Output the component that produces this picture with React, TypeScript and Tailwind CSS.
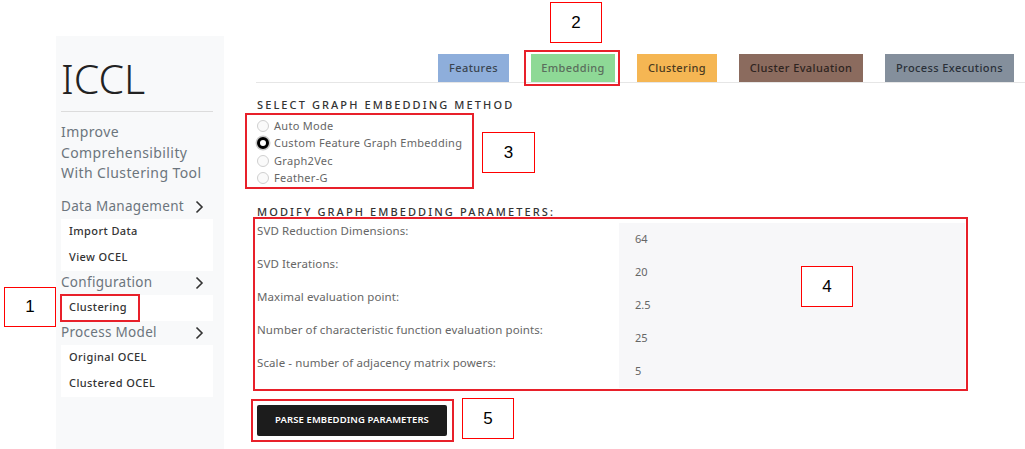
const font = { fontFamily: '"Noto Sans", "Open Sans", sans-serif' };

const NumBox = ({ n, className }: { n: string; className: string }) => (
  <div
    className={`absolute flex items-center justify-center border border-[#ff0000] bg-white text-[17px] text-black ${className}`}
    style={{ fontFamily: '"Liberation Sans", Arial, sans-serif' }}
  >
    {n}
  </div>
);

const Chevron = () => (
  <svg width="10" height="14" viewBox="0 0 10 14" fill="none">
    <path d="M2.5 1.5 8 7l-5.5 5.5" stroke="#333" strokeWidth="1.6" />
  </svg>
);

const SideGroup = ({ title, items, marked }: { title: string; items: string[]; marked?: string }) => (
  <div>
    <div className="flex h-[24px] items-center justify-between pr-[9px] text-[13.5px] tracking-[0.3px] text-[#6c757d]">
      {title}
      <Chevron />
    </div>
    <div className="bg-white">
      {items.map((it) => (
        <div key={it} className="relative flex h-[26px] items-center pl-[8px] text-[11px] font-medium tracking-[0.4px] text-[#333]">
          {it}
          {marked === it && <span className="absolute -left-[1px] top-[-1px] h-[28px] w-[80px] border-2 border-[#e8202a]" />}
        </div>
      ))}
    </div>
  </div>
);

const tabs = [
  { label: 'Features', w: 'w-[71px]', bg: 'bg-[#8eaedb]', c: 'text-[#3a4550]' },
  { label: 'Embedding', w: 'w-[84px]', bg: 'bg-[#8ed996]', c: 'text-[#5a6e5c]' },
  { label: 'Clustering', w: 'w-[80px]', bg: 'bg-[#f5b653]', c: 'text-[#4a3a20]' },
  { label: 'Cluster Evaluation', w: 'w-[124px]', bg: 'bg-[#8b6b5e]', c: 'text-[#2e2420]' },
  { label: 'Process Executions', w: 'w-[129px]', bg: 'bg-[#848f9c]', c: 'text-[#2a3038]' },
];

const methods = ['Auto Mode', 'Custom Feature Graph Embedding', 'Graph2Vec', 'Feather-G'];

const params = [
  ['SVD Reduction Dimensions:', '64'],
  ['SVD Iterations:', '20'],
  ['Maximal evaluation point:', '2.5'],
  ['Number of characteristic function evaluation points:', '25'],
  ['Scale - number of adjacency matrix powers:', '5'],
];

export default function App() {
  return (
    <div className="relative flex h-[449px] w-[1025px] overflow-hidden bg-white" style={font}>
      {/* sidebar */}
      <aside className="ml-[56px] mt-[36px] w-[168px] bg-[#f8f9fa] pl-[5px] pr-[11px]">
        <div className="mt-[14px] text-[41px] font-light leading-[56px] text-[#222]">ICCL</div>
        <div className="mt-[5px] border-t border-[#dcdcdc]" />
        <div className="mt-[10px] text-[14px] leading-[20.5px] tracking-[0.4px] text-[#6c757d]">
          Improve
          <br />
          Comprehensibility
          <br />
          With Clustering Tool
        </div>
        <div className="mt-[11px]">
          <SideGroup title="Data Management" items={['Import Data', 'View OCEL']} />
          <SideGroup title="Configuration" items={['Clustering']} marked="Clustering" />
          <SideGroup title="Process Model" items={['Original OCEL', 'Clustered OCEL']} />
        </div>
      </aside>

      {/* main */}
      <main className="ml-[32px] flex flex-1 flex-col">
        <div className="mt-[54px] flex justify-end gap-[22px] border-b border-[#e6e6e6] pr-[11px]">
          {tabs.map((t) => (
            <div
              key={t.label}
              className={`relative flex h-[28px] items-center justify-center text-[11px] font-medium tracking-[0.4px] ${t.w} ${t.bg} ${t.c}`}
            >
              {t.label}
              {t.label === 'Embedding' && (
                <span className="absolute -bottom-[4px] -left-[7px] -right-[5px] -top-[4px] border-2 border-[#e8202a]" />
              )}
            </div>
          ))}
        </div>

        <div className="pl-[1px]">
          <div className="mt-[15px] text-[11px] font-medium leading-[14px] tracking-[2.1px] text-[#333]">
            SELECT GRAPH EMBEDDING METHOD
          </div>
          <div className="relative mt-[5px] w-[210px]">
            {methods.map((m, i) => (
              <div key={m} className="flex h-[17.5px] items-center gap-[5px] text-[11px] tracking-[0.3px] text-[#666]">
                {i === 1 ? (
                  <span className="h-[12px] w-[12px] rounded-full border-[3.5px] border-black bg-white shadow-[0_0_0_1.5px_#c8c8c8]" />
                ) : (
                  <span className="h-[12px] w-[12px] rounded-full border border-[#cfcfcf] bg-[#fafafa]" />
                )}
                {m}
              </div>
            ))}
            <span className="absolute -left-[12px] top-[-4px] h-[76px] w-[229px] border-2 border-[#e8202a]" />
          </div>

          <div className="mt-[19px] text-[11px] font-medium leading-[12px] tracking-[2.1px] text-[#333]">
            MODIFY GRAPH EMBEDDING PARAMETERS:
          </div>
          <div className="ml-[-4px] -mt-[1px] w-[715px] border-2 border-[#e8202a] pb-[1px] pl-[2px] pr-[1px] pt-[4px]">
            <div className="grid grid-cols-[362px_1fr]">
              <div>
                {params.map(([l]) => (
                  <div key={l} className="h-[33px] text-[11.5px] leading-[16px] tracking-[0.1px] text-[#666]">
                    {l}
                  </div>
                ))}
              </div>
              <div className="bg-[#f7f7f9]">
                {params.map(([l, v]) => (
                  <div key={l} className="flex h-[33px] items-center pl-[16px] text-[11px] text-[#666]">
                    {v}
                  </div>
                ))}
              </div>
            </div>
          </div>

          <div className="ml-[-6px] mt-[8px] w-[203px] border-2 border-[#e8202a] p-[4px]">
            <button className="flex h-[31px] w-[190px] items-center justify-center rounded-[2px] bg-[#1c1c1c] text-[9.5px] font-semibold tracking-[0.1px] text-white">
              PARSE EMBEDDING PARAMETERS
            </button>
          </div>
        </div>
      </main>

      <NumBox n="1" className="left-[4px] top-[287px] h-[40px] w-[52px]" />
      <NumBox n="2" className="left-[550px] top-[2px] h-[41px] w-[52px]" />
      <NumBox n="3" className="left-[482px] top-[132px] h-[41px] w-[53px]" />
      <NumBox n="4" className="left-[801px] top-[266px] h-[41px] w-[52px]" />
      <NumBox n="5" className="left-[462px] top-[398px] h-[41px] w-[52px]" />
    </div>
  );
}
